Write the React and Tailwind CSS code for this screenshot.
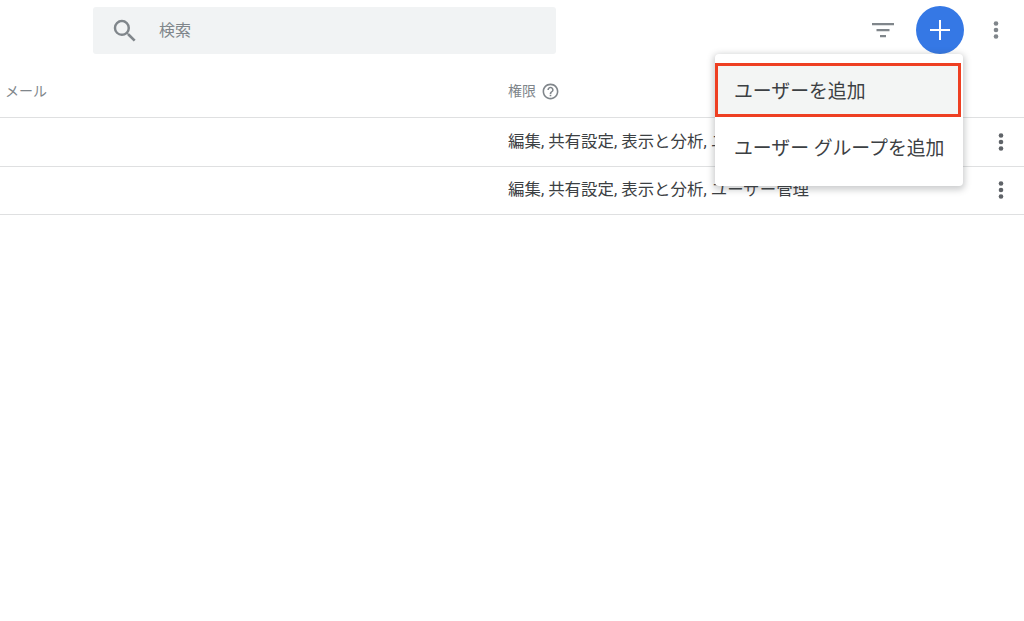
import React from "react";

const FONT = { fontFamily: '"Roboto", "Noto Sans CJK JP", sans-serif' };

function Kebab({ fill }) {
  return (
    <svg width="6" height="20" viewBox="0 0 6 20" style={{ fill }}>
      <circle cx="3" cy="3.5" r="2.3" />
      <circle cx="3" cy="10" r="2.3" />
      <circle cx="3" cy="16.5" r="2.3" />
    </svg>
  );
}

function Row({ tall }) {
  return (
    <div className={tall ? "flex h-[49px] items-center border-b border-[#dfe0e1]" : "flex h-[48px] items-center border-b border-[#dfe0e1]"}>
      <div className="w-[508px] shrink-0" />
      <div className="flex-1 whitespace-nowrap text-[16.45px] text-[#3c4043]">編集, 共有設定, 表示と分析, ユーザー管理</div>
      <div className={tall ? "flex w-[46px] shrink-0 justify-center" : "mb-[1px] flex w-[46px] shrink-0 justify-center"}>
        <Kebab fill="#5f6368" />
      </div>
    </div>
  );
}

export default function App() {
  return (
    <div className="relative h-[621px] w-[1024px] overflow-hidden bg-white" style={FONT}>
      <div className="flex h-[66px] items-start pt-[6px]">
        <div className="ml-[93px] mt-[1px] flex h-[47px] w-[463px] items-center rounded-[3px] bg-[#f1f3f4] pl-[17px]">
          <svg width="30" height="30" viewBox="0 0 24 24" fill="#80868b">
            <path d="M15.5 14h-.79l-.28-.27A6.471 6.471 0 0 0 16 9.500 6.500 6.500 0 1 0 9.500 16c1.610 0 3.090-.59 4.230-1.570l.27.28v.79l5 4.990L20.490 19l-4.990-5zm-6 0C7.010 14 5 11.990 5 9.500S7.010 5 9.500 5 14 7.010 14 9.500 11.990 14 9.500 14z" />
          </svg>
          <span className="ml-[19px] text-[16px] text-[#80868b]">検索</span>
        </div>
        <div className="ml-[315px] mt-[12px] w-[24px]">
          <svg width="24" height="24" viewBox="0 0 24 24" fill="#80868b">
            <path d="M1 5h22v2.200H1zM5.500 11h13v2.200h-13zM9 17h6v2.200H9z" />
          </svg>
        </div>
        <div className="ml-[21px] flex h-[48px] w-[48px] items-center justify-center rounded-full bg-[#3578e5]">
          <svg width="20" height="20" viewBox="0 0 20 20" fill="#ffffff">
            <path d="M9 0h2v9h9v2h-9v9H9v-9H0V9h9z" />
          </svg>
        </div>
        <div className="ml-[29px] mt-[14px] flex w-[6px]">
          <Kebab fill="#80868b" />
        </div>
      </div>

      <div className="flex h-[52px] items-center border-b border-[#dfe0e1] text-[14px] text-[#80868b]">
        <div className="w-[508px] shrink-0 pl-[5px]">メール</div>
        <div className="flex items-center gap-[5px]">
          <span>権限</span>
          <svg width="19" height="19" viewBox="0 0 24 24" fill="#80868b">
            <path d="M11 18h2v-2h-2v2zm1-16C6.480 2 2 6.480 2 12s4.480 10 10 10 10-4.480 10-10S17.520 2 12 2zm0 18c-4.410 0-8-3.590-8-8s3.590-8 8-8 8 3.590 8 8-3.590 8-8 8zm0-14c-2.210 0-4 1.790-4 4h2c0-1.100.9-2 2-2s2 .9 2 2c0 2-3 1.750-3 5h2c0-2.250 3-2.500 3-5 0-2.210-1.790-4-4-4z" />
          </svg>
        </div>
      </div>
      <Row tall />
      <Row />

      <div className="absolute left-[715px] top-[54px] h-[132px] w-[248px] rounded-[4px] bg-white pt-[9px] shadow-[0_2px_6px_2px_rgba(60,64,67,0.25)]">
        <div className="flex h-[54px] w-[246px] items-center border-[3px] border-[#ee3f22] bg-[#f3f5f4] pl-[16px] pt-[5px] text-[18.85px] text-[#3c4043]">
          ユーザーを追加
        </div>
        <div className="flex h-[54px] items-center whitespace-nowrap pl-[19px] pt-[10px] text-[18.85px] text-[#3c4043]">
          ユーザー グループを追加
        </div>
      </div>
    </div>
  );
}
